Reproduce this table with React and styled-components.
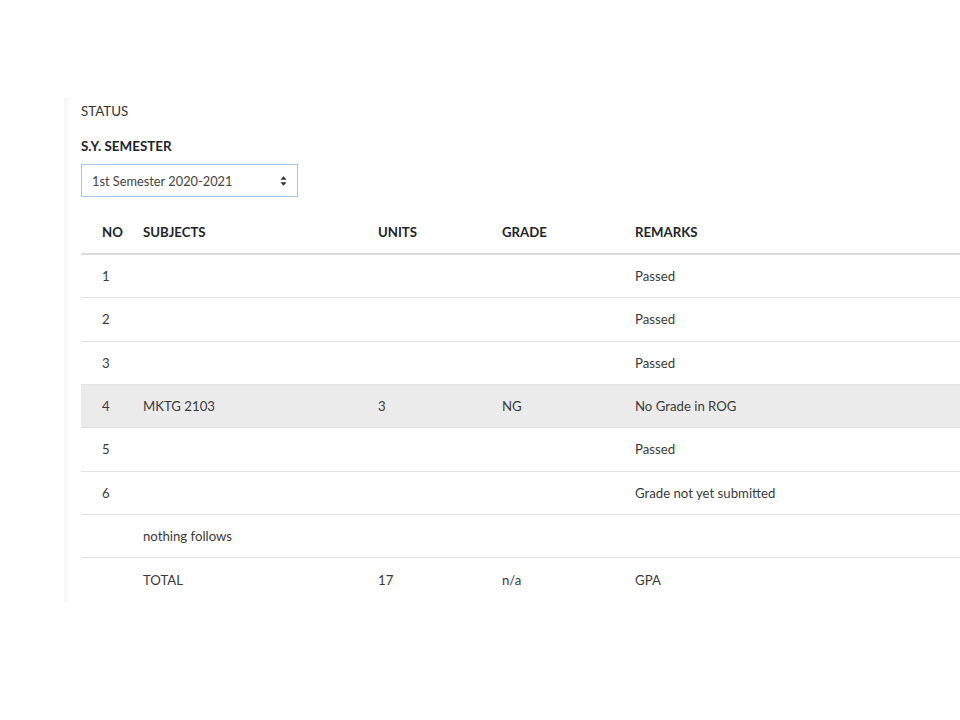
import React from 'react';
import styled, { createGlobalStyle } from 'styled-components';

const GlobalStyle = createGlobalStyle`
  body {
    margin: 0;
    background: #fff;
    font-family: Lato, 'Open Sans', sans-serif;
    color: #3a3a3a;
  }
`;

const Page = styled.div`
  padding: 97px 0 0 64px;
  height: 720px;
  box-sizing: border-box;
  overflow: hidden;
`;

const Panel = styled.div`
  padding-left: 17px;
  background: linear-gradient(to right, #f6f6f6 0, #fbfbfb 4px, #fff 7px);
`;

const Status = styled.div`
  font-size: 13.4px;
  line-height: 28px;
  color: #333;
`;

const Label = styled.div`
  margin-top: 11px;
  font-size: 13.4px;
  line-height: 20px;
  font-weight: 700;
  color: #212529;
`;

const SelectBox = styled.div`
  margin-top: 8px;
  width: 217px;
  height: 33px;
  box-sizing: border-box;
  border: 1px solid #a9c8e8;
  display: flex;
  align-items: center;
  justify-content: space-between;
  padding: 0 10px 0 10px;
  font-size: 12.8px;
  color: #444;
`;

const Arrows = styled.svg`
  width: 7px;
  height: 10px;
`;

const Table = styled.div`
  margin-top: 14px;
  font-size: 13.2px;
`;

const Row = styled.div`
  display: grid;
  grid-template-columns: 62px 235px 124px 133px 1fr;
  height: ${p => (p.$head ? '44px' : '43.33px')};
  box-sizing: border-box;
  align-items: center;
  border-bottom: ${p => (p.$head ? '2px solid #dcdcdc' : '1px solid #e2e2e2')};
  background: ${p => (p.$shade ? '#ebebeb' : 'transparent')};
  font-weight: ${p => (p.$head ? 700 : 400)};
  color: ${p => (p.$head ? '#212529' : '#3a3a3a')};
  &:last-child {
    border-bottom: none;
  }
`;

const Cell = styled.div`
  padding-left: ${p => (p.$first ? '21px' : '0')};
  white-space: nowrap;
`;

const rows = [
  ['1', '', '', '', 'Passed'],
  ['2', '', '', '', 'Passed'],
  ['3', '', '', '', 'Passed'],
  ['4', 'MKTG 2103', '3', 'NG', 'No Grade in ROG', true],
  ['5', '', '', '', 'Passed'],
  ['6', '', '', '', 'Grade not yet submitted'],
  ['', 'nothing follows', '', '', ''],
  ['', 'TOTAL', '17', 'n/a', 'GPA'],
];

export default function App() {
  return (
    <>
      <GlobalStyle />
      <Page>
        <Panel>
          <Status>STATUS</Status>
          <Label>S.Y. SEMESTER</Label>
          <SelectBox>
            <span>1st Semester 2020-2021</span>
            <Arrows viewBox="0 0 8 11">
              <path d="M4 0 L7.5 4 H0.5 Z M4 11 L7.5 7 H0.5 Z" fill="#333" />
            </Arrows>
          </SelectBox>
          <Table>
            <Row $head>
              <Cell $first>NO</Cell>
              <Cell>SUBJECTS</Cell>
              <Cell>UNITS</Cell>
              <Cell>GRADE</Cell>
              <Cell>REMARKS</Cell>
            </Row>
            {rows.map((r, i) => (
              <Row key={i} $shade={r[5]}>
                <Cell $first>{r[0]}</Cell>
                <Cell>{r[1]}</Cell>
                <Cell>{r[2]}</Cell>
                <Cell>{r[3]}</Cell>
                <Cell>{r[4]}</Cell>
              </Row>
            ))}
          </Table>
        </Panel>
      </Page>
    </>
  );
}
